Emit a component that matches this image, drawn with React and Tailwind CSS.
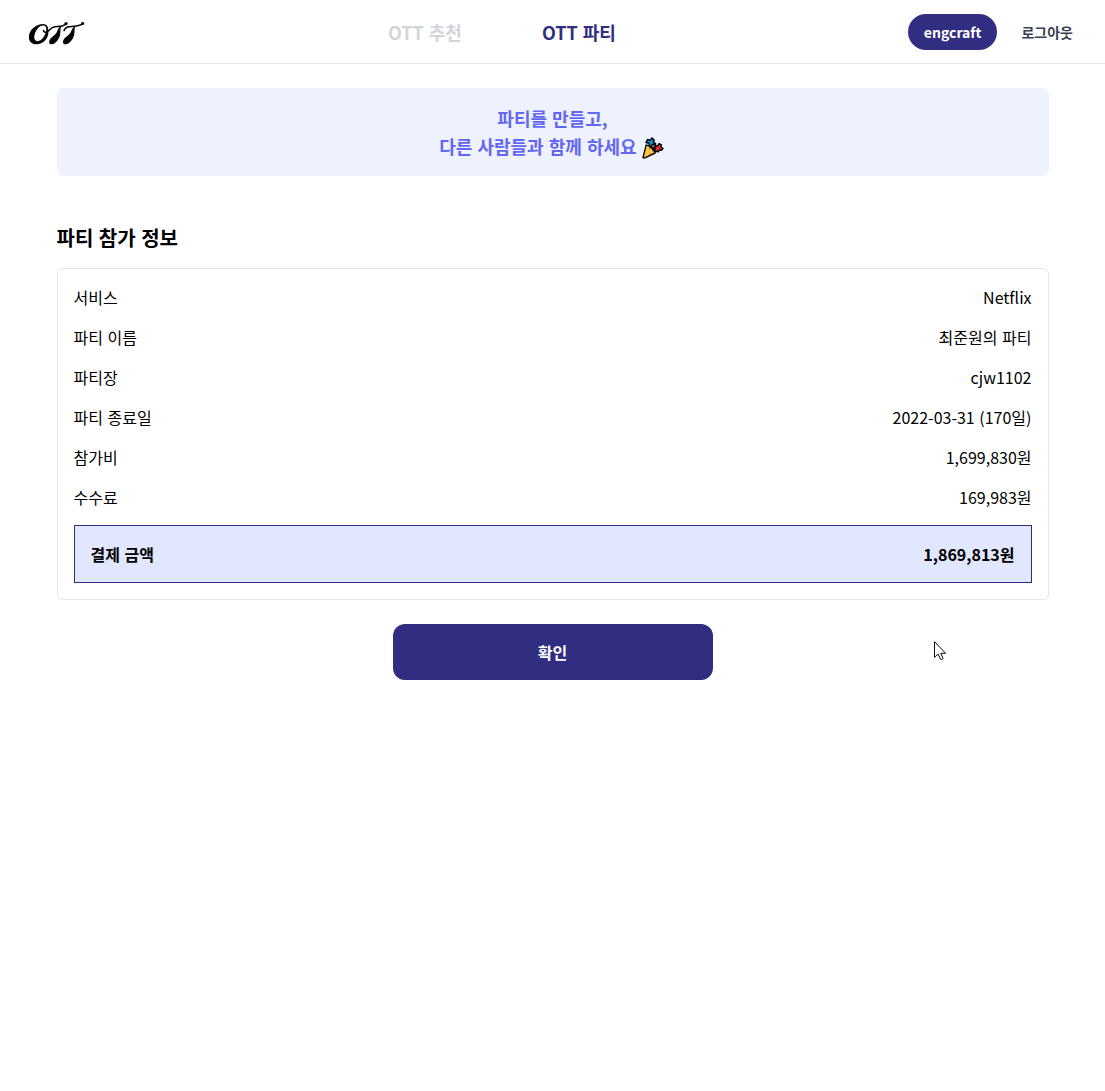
const rows = [
  ['서비스', 'Netflix'],
  ['파티 이름', '최준원의 파티'],
  ['파티장', 'cjw1102'],
  ['파티 종료일', '2022-03-31 (170일)'],
  ['참가비', '1,699,830원'],
  ['수수료', '169,983원'],
];

function Logo() {
  return (
    <svg width="68" height="26" viewBox="0 0 68 26" fill="none" aria-label="OTT">
      <path
        fillRule="evenodd"
        fill="#050505"
        d="M15.4 5C7.8 5 .9 11 .9 18.2C.9 22.8 4.2 25.4 8.8 25.3C15 25.1 20.2 20.2 20.4 13.6C20.5 8.6 19.6 5 15.4 5ZM15 6.4C18.2 6.4 18.8 9 18 12.6C16.8 17.6 13.4 22 9.8 22.2C5.8 22.2 5.4 17.4 7.6 12.8C9.4 9.2 12 6.4 15 6.4Z"
      />
      <path d="M15.6 11.6C15.8 14.2 19.4 13.6 22 10.6C25.4 6.2 29.5 8.4 34.2 7C36.6 6.2 38 5.6 38.6 4.4" stroke="#050505" strokeWidth="1.5" strokeLinecap="round" />
      <path d="M36 11.6C38.4 5.8 43.6 8.2 48.2 7C51.3 6.4 54 6.2 55.2 4.2" stroke="#050505" strokeWidth="1.5" strokeLinecap="round" />
      <path d="M33.8 7C31.4 9.6 33.4 13.6 31.4 18.2C29.2 23 26 25.4 23.4 25.3C20.6 25.1 20.6 21.8 22.6 19.4C24.4 17.2 27 16.6 28.6 13.6C30 10.8 30.2 8.6 33.8 7Z" fill="#050505" />
      <path d="M48 7C45.4 9.6 47.6 13.6 45.4 18.2C43.2 23 39.8 25.4 37.2 25.3C34.4 25.1 34.4 21.8 36.4 19.4C38.4 17.2 41 16.6 42.6 13.6C44 10.8 44.2 8.6 48 7Z" fill="#050505" />
      <circle cx="38" cy="4.6" r="1.6" fill="#050505" />
      <circle cx="54.6" cy="4.5" r="1.6" fill="#050505" />
    </svg>
  );
}

function PartyPopper() {
  return (
    <svg width="22" height="22" viewBox="0 0 22 22" className="mr-0.5 inline-block align-[-5px]" aria-hidden="true">
      <g stroke="#000" strokeWidth="1.4" strokeLinejoin="round">
        <path d="M4 5.5L5.5 2.5L8 3.2L10 .9L12.3 3.2L11.4 5L13.6 6.5L11 10.5L7.5 8.5L6.8 6.2Z" fill="#168cc0" />
        <path d="M12 11.4L13.4 8.6L15.6 8.8L17 6.6L19.4 7.8L18.8 10L21 11.4L19.5 13.2L17.4 12.8L16.2 14.8L12.5 14Z" fill="#e52b31" />
        <path d="M10.2 7.6L12.4 6.8L14 8.4L13 12L10.2 10.6Z" fill="#46305e" />
        <path d="M1 20.6L4.2 7.9C7.2 8.6 12.7 13.3 13.2 16L3.4 20.6Q1.8 21.4 1 20.6Z" fill="#ffc73e" />
      </g>
      <path d="M6.7 11.2h1.2v1.2H6.7zM7.6 16h1.2v1.2H7.6z" fill="#f04e50" />
      <path d="M10 13h1v1.2h-1z" fill="#168cc0" />
      <path d="M10.4 8.4h1v1.6h-1z" fill="#ffe14a" />
    </svg>
  );
}

function Cursor() {
  return (
    <svg width="13" height="20" viewBox="0 0 13 20" className="pointer-events-none absolute left-[934px] top-[641px]" aria-hidden="true">
      <path d="M.5 .6V16.3L4.1 13L6.5 18.3Q7.6 19.3 9.1 17.7L6.8 12.3H11.6Z" fill="#fff" stroke="#0b0b16" strokeWidth="1" />
    </svg>
  );
}

export default function App() {
  return (
    <div className="relative min-h-screen bg-white font-['Noto_Sans_CJK_KR','Noto_Sans',sans-serif] text-base text-black [word-spacing:1px]">
      <header className="flex h-16 items-center justify-between border-b border-[#e5e5e5] pl-7 pr-8">
        <Logo />
        <nav className="flex gap-20 text-lg font-bold">
          <a className="text-[#d1d5db]">OTT 추천</a>
          <a className="text-[#312e81]">OTT 파티</a>
        </nav>
        <div className="flex items-center gap-6 text-sm">
          <button className="rounded-full bg-[#312e81] px-4 py-2 font-bold text-white">engcraft</button>
          <button className="font-bold text-[#374151]">로그아웃</button>
        </div>
      </header>
      <main className="mx-auto max-w-5xl px-4 pt-6">
        <section className="rounded-lg bg-[#eef2ff] p-4 text-center text-lg font-bold text-[#6366f1]">
          <p>파티를 만들고,</p>
          <p className="h-7">다른 사람들과 함께 하세요 <PartyPopper /></p>
        </section>
        <h1 className="mt-12 text-xl font-bold">파티 참가 정보</h1>
        <section className="mt-4 rounded-md border border-[#e5e5e5] p-4">
          <dl>
            {rows.map(([label, value]) => (
              <div key={label} className="mb-4 flex justify-between">
                <dt>{label}</dt>
                <dd>{value}</dd>
              </div>
            ))}
            <div className="flex justify-between border border-[#312e81] bg-[#e0e7ff] p-4 font-bold">
              <dt>결제 금액</dt>
              <dd>1,869,813원</dd>
            </div>
          </dl>
        </section>
        <button className="mx-auto mt-6 block h-14 w-80 rounded-xl bg-[#312e81] font-bold text-white">확인</button>
      </main>
      <Cursor />
    </div>
  );
}
